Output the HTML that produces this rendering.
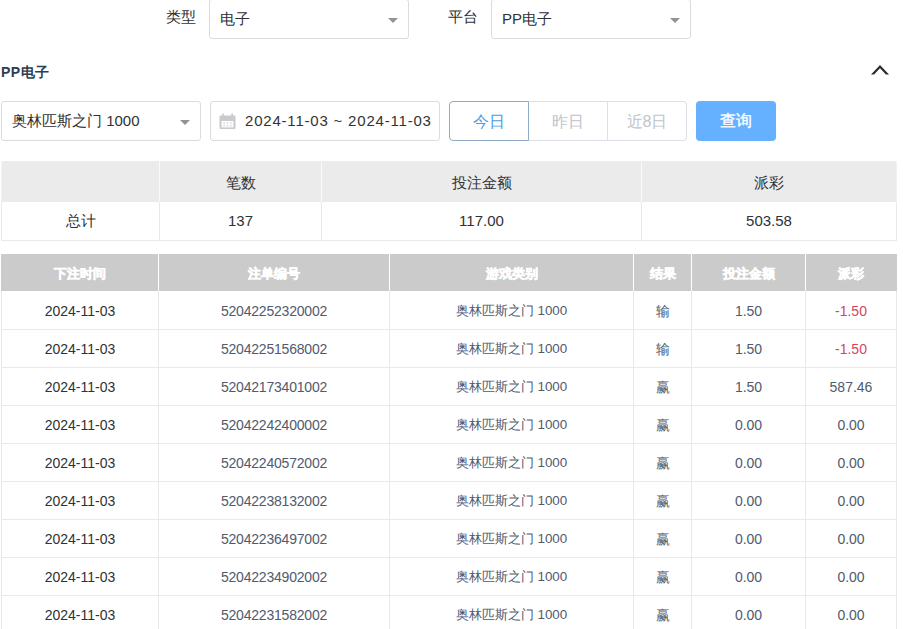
<!DOCTYPE html>
<html><head><meta charset="utf-8">
<style>
*{box-sizing:border-box;margin:0;padding:0}
html,body{width:903px;height:629px;overflow:hidden;background:#fff}
body{position:relative;font-family:"Liberation Sans",sans-serif;font-size:14px;color:#303133}
.a{position:absolute}
.bd{background:#e9e9e9}
.lbl{position:absolute;font-size:15px;color:#303133;line-height:16px;white-space:nowrap}
.sel{position:absolute;height:40px;border:1px solid #dcdcdc;border-radius:3px;background:#fff}
.sel .t{position:absolute;left:10px;top:0;line-height:38px;font-size:15px;color:#303133;white-space:nowrap}
.tri{position:absolute;width:0;height:0;border-left:5px solid transparent;border-right:5px solid transparent;border-top:5px solid #909399}
.title{position:absolute;left:1px;top:63px;font-weight:bold;font-size:14px;letter-spacing:0.5px;color:#2c3e50;line-height:18px;white-space:nowrap}
.btn{position:absolute;top:101px;height:40px;border:1px solid #dcdfe6;background:#fff;color:#c0c4cc;font-size:16px;line-height:40px;text-align:center}
.qry{position:absolute;left:696px;top:101px;width:80px;height:40px;background:#66b1ff;border-radius:4px;color:#fff;font-size:16px;line-height:40px;text-align:center;-webkit-text-stroke:0.35px #fff}
.sc{text-align:center;font-size:15px;color:#303133;white-space:nowrap}
.sh{padding-top:1px}
.mh{text-align:center;font-size:13px;font-weight:bold;-webkit-text-stroke:0.5px #fff;color:#fff;white-space:nowrap;padding-top:1px}
.mc{text-align:center;font-size:14px;color:#515a6e;white-space:nowrap;padding-top:1px}
.mc.dt{color:#303133}
.mc.c2{font-size:13.4px}
.mc.c1{letter-spacing:-0.2px}
.red{color:#d4455e!important}
</style></head><body>
<div class="lbl" style="left:166px;top:9px">类型</div>
<div class="sel" style="left:209px;top:-1px;width:200px"><span class="t" style="top:0px">电子</span><i class="tri" style="left:178px;top:18px"></i></div>
<div class="lbl" style="left:448px;top:9px">平台</div>
<div class="sel" style="left:491px;top:-1px;width:200px"><span class="t" style="top:0px">PP电子</span><i class="tri" style="left:178px;top:18px"></i></div>

<div class="title">PP电子</div>
<svg class="a" style="left:870px;top:63px" width="20" height="13" viewBox="0 0 20 13"><path d="M1 11.5 L10 2 L19 11.5 L15.9 11.5 L10 5.3 L4.1 11.5 Z" fill="#2b2d33"/></svg>

<div class="sel" style="left:1px;top:101px;width:200px"><span class="t">奥林匹斯之门 1000</span><i class="tri" style="left:178px;top:18px"></i></div>
<div class="sel" style="left:210px;top:101px;width:230px">
<svg class="a" style="left:8px;top:11px" width="18" height="18" viewBox="0 0 18 18"><rect x="0.5" y="2.5" width="16" height="13.6" rx="1" fill="#c9cacd"/><rect x="2.6" y="8" width="11.8" height="6.4" fill="#fff"/><rect x="3.3" y="0.4" width="1.8" height="3.6" rx="0.6" fill="#c9cacd"/><rect x="12.2" y="0.4" width="1.8" height="3.6" rx="0.6" fill="#c9cacd"/><g fill="#d6d8dc"><rect x="4.3" y="9.2" width="1.6" height="1.5"/><rect x="7.7" y="9.2" width="1.6" height="1.5"/><rect x="11.1" y="9.2" width="1.6" height="1.5"/><rect x="4.3" y="12" width="1.6" height="1.5"/><rect x="7.7" y="12" width="1.6" height="1.5"/><rect x="11.1" y="12" width="1.6" height="1.5"/></g></svg>
<span class="t" style="left:34px;font-size:15px;letter-spacing:0.8px;top:0px;color:#333">2024-11-03 ~ 2024-11-03</span></div>

<div class="btn" style="left:529px;width:79px;border-left:none">昨日</div>
<div class="btn" style="left:608px;width:79px;border-left:none;border-radius:0 4px 4px 0">近8日</div>
<div class="btn" style="left:449px;width:80px;border-color:#8eacc8;color:#4c9be6;border-radius:4px 0 0 4px">今日</div>
<div class="qry">查询</div>
<div class="a" style="left:1px;top:161px;width:896px;height:41px;background:#ebebeb;border-radius:3px 3px 0 0;box-shadow:inset 1px 0 0 #f2f2f2,inset -1px 0 0 #f2f2f2"></div>
<div class="a bd" style="left:1px;top:202px;width:1px;height:39px"></div>
<div class="a bd" style="left:896px;top:202px;width:1px;height:39px"></div>
<div class="a bd" style="left:1px;top:240px;width:896px;height:1px"></div>
<div class="a" style="left:159px;top:161px;width:1px;height:41px;background:#fafafa"></div>
<div class="a bd" style="left:159px;top:202px;width:1px;height:39px"></div>
<div class="a" style="left:321px;top:161px;width:1px;height:41px;background:#fafafa"></div>
<div class="a bd" style="left:321px;top:202px;width:1px;height:39px"></div>
<div class="a" style="left:641px;top:161px;width:1px;height:41px;background:#fafafa"></div>
<div class="a bd" style="left:641px;top:202px;width:1px;height:39px"></div>
<div class="a sc sh" style="left:1px;top:161px;width:159px;height:41px;line-height:41px"></div>
<div class="a sc sbt" style="left:1px;top:202px;width:159px;height:38px;line-height:38px">总计</div>
<div class="a sc sh" style="left:159px;top:161px;width:163px;height:41px;line-height:41px">笔数</div>
<div class="a sc sbt" style="left:159px;top:202px;width:163px;height:38px;line-height:38px">137</div>
<div class="a sc sh" style="left:321px;top:161px;width:321px;height:41px;line-height:41px">投注金额</div>
<div class="a sc sbt" style="left:321px;top:202px;width:321px;height:38px;line-height:38px">117.00</div>
<div class="a sc sh" style="left:641px;top:161px;width:256px;height:41px;line-height:41px">派彩</div>
<div class="a sc sbt" style="left:641px;top:202px;width:256px;height:38px;line-height:38px">503.58</div>
<div class="a" style="left:1px;top:254px;width:896px;height:37px;background:#cbcbcb"></div>
<div class="a" style="left:158px;top:254px;width:1px;height:37px;background:#fff"></div>
<div class="a" style="left:389px;top:254px;width:1px;height:37px;background:#fff"></div>
<div class="a" style="left:633px;top:254px;width:1px;height:37px;background:#fff"></div>
<div class="a" style="left:691px;top:254px;width:1px;height:37px;background:#fff"></div>
<div class="a" style="left:805px;top:254px;width:1px;height:37px;background:#fff"></div>
<div class="a mh" style="left:1px;top:254px;width:158px;height:37px;line-height:37px">下注时间</div>
<div class="a mh" style="left:158px;top:254px;width:232px;height:37px;line-height:37px">注单编号</div>
<div class="a mh" style="left:389px;top:254px;width:245px;height:37px;line-height:37px">游戏类别</div>
<div class="a mh" style="left:633px;top:254px;width:59px;height:37px;line-height:37px">结果</div>
<div class="a mh" style="left:691px;top:254px;width:115px;height:37px;line-height:37px">投注金额</div>
<div class="a mh" style="left:805px;top:254px;width:92px;height:37px;line-height:37px">派彩</div>
<div class="a bd" style="left:1px;top:291px;width:1px;height:342px"></div>
<div class="a bd" style="left:158px;top:291px;width:1px;height:342px"></div>
<div class="a bd" style="left:389px;top:291px;width:1px;height:342px"></div>
<div class="a bd" style="left:633px;top:291px;width:1px;height:342px"></div>
<div class="a bd" style="left:691px;top:291px;width:1px;height:342px"></div>
<div class="a bd" style="left:805px;top:291px;width:1px;height:342px"></div>
<div class="a bd" style="left:896px;top:291px;width:1px;height:342px"></div>
<div class="a bd" style="left:1px;top:329px;width:896px;height:1px"></div>
<div class="a mc dt c0" style="left:1px;top:291px;width:158px;height:38px;line-height:38px">2024-11-03</div>
<div class="a mc c1" style="left:158px;top:291px;width:232px;height:38px;line-height:38px">52042252320002</div>
<div class="a mc c2" style="left:389px;top:291px;width:245px;height:38px;line-height:38px">奥林匹斯之门 1000</div>
<div class="a mc c3" style="left:633px;top:291px;width:59px;height:38px;line-height:38px">输</div>
<div class="a mc c4" style="left:691px;top:291px;width:115px;height:38px;line-height:38px">1.50</div>
<div class="a mc red c5" style="left:805px;top:291px;width:92px;height:38px;line-height:38px">-1.50</div>
<div class="a bd" style="left:1px;top:367px;width:896px;height:1px"></div>
<div class="a mc dt c0" style="left:1px;top:329px;width:158px;height:38px;line-height:38px">2024-11-03</div>
<div class="a mc c1" style="left:158px;top:329px;width:232px;height:38px;line-height:38px">52042251568002</div>
<div class="a mc c2" style="left:389px;top:329px;width:245px;height:38px;line-height:38px">奥林匹斯之门 1000</div>
<div class="a mc c3" style="left:633px;top:329px;width:59px;height:38px;line-height:38px">输</div>
<div class="a mc c4" style="left:691px;top:329px;width:115px;height:38px;line-height:38px">1.50</div>
<div class="a mc red c5" style="left:805px;top:329px;width:92px;height:38px;line-height:38px">-1.50</div>
<div class="a bd" style="left:1px;top:405px;width:896px;height:1px"></div>
<div class="a mc dt c0" style="left:1px;top:367px;width:158px;height:38px;line-height:38px">2024-11-03</div>
<div class="a mc c1" style="left:158px;top:367px;width:232px;height:38px;line-height:38px">52042173401002</div>
<div class="a mc c2" style="left:389px;top:367px;width:245px;height:38px;line-height:38px">奥林匹斯之门 1000</div>
<div class="a mc c3" style="left:633px;top:367px;width:59px;height:38px;line-height:38px">赢</div>
<div class="a mc c4" style="left:691px;top:367px;width:115px;height:38px;line-height:38px">1.50</div>
<div class="a mc c5" style="left:805px;top:367px;width:92px;height:38px;line-height:38px">587.46</div>
<div class="a bd" style="left:1px;top:443px;width:896px;height:1px"></div>
<div class="a mc dt c0" style="left:1px;top:405px;width:158px;height:38px;line-height:38px">2024-11-03</div>
<div class="a mc c1" style="left:158px;top:405px;width:232px;height:38px;line-height:38px">52042242400002</div>
<div class="a mc c2" style="left:389px;top:405px;width:245px;height:38px;line-height:38px">奥林匹斯之门 1000</div>
<div class="a mc c3" style="left:633px;top:405px;width:59px;height:38px;line-height:38px">赢</div>
<div class="a mc c4" style="left:691px;top:405px;width:115px;height:38px;line-height:38px">0.00</div>
<div class="a mc c5" style="left:805px;top:405px;width:92px;height:38px;line-height:38px">0.00</div>
<div class="a bd" style="left:1px;top:481px;width:896px;height:1px"></div>
<div class="a mc dt c0" style="left:1px;top:443px;width:158px;height:38px;line-height:38px">2024-11-03</div>
<div class="a mc c1" style="left:158px;top:443px;width:232px;height:38px;line-height:38px">52042240572002</div>
<div class="a mc c2" style="left:389px;top:443px;width:245px;height:38px;line-height:38px">奥林匹斯之门 1000</div>
<div class="a mc c3" style="left:633px;top:443px;width:59px;height:38px;line-height:38px">赢</div>
<div class="a mc c4" style="left:691px;top:443px;width:115px;height:38px;line-height:38px">0.00</div>
<div class="a mc c5" style="left:805px;top:443px;width:92px;height:38px;line-height:38px">0.00</div>
<div class="a bd" style="left:1px;top:519px;width:896px;height:1px"></div>
<div class="a mc dt c0" style="left:1px;top:481px;width:158px;height:38px;line-height:38px">2024-11-03</div>
<div class="a mc c1" style="left:158px;top:481px;width:232px;height:38px;line-height:38px">52042238132002</div>
<div class="a mc c2" style="left:389px;top:481px;width:245px;height:38px;line-height:38px">奥林匹斯之门 1000</div>
<div class="a mc c3" style="left:633px;top:481px;width:59px;height:38px;line-height:38px">赢</div>
<div class="a mc c4" style="left:691px;top:481px;width:115px;height:38px;line-height:38px">0.00</div>
<div class="a mc c5" style="left:805px;top:481px;width:92px;height:38px;line-height:38px">0.00</div>
<div class="a bd" style="left:1px;top:557px;width:896px;height:1px"></div>
<div class="a mc dt c0" style="left:1px;top:519px;width:158px;height:38px;line-height:38px">2024-11-03</div>
<div class="a mc c1" style="left:158px;top:519px;width:232px;height:38px;line-height:38px">52042236497002</div>
<div class="a mc c2" style="left:389px;top:519px;width:245px;height:38px;line-height:38px">奥林匹斯之门 1000</div>
<div class="a mc c3" style="left:633px;top:519px;width:59px;height:38px;line-height:38px">赢</div>
<div class="a mc c4" style="left:691px;top:519px;width:115px;height:38px;line-height:38px">0.00</div>
<div class="a mc c5" style="left:805px;top:519px;width:92px;height:38px;line-height:38px">0.00</div>
<div class="a bd" style="left:1px;top:595px;width:896px;height:1px"></div>
<div class="a mc dt c0" style="left:1px;top:557px;width:158px;height:38px;line-height:38px">2024-11-03</div>
<div class="a mc c1" style="left:158px;top:557px;width:232px;height:38px;line-height:38px">52042234902002</div>
<div class="a mc c2" style="left:389px;top:557px;width:245px;height:38px;line-height:38px">奥林匹斯之门 1000</div>
<div class="a mc c3" style="left:633px;top:557px;width:59px;height:38px;line-height:38px">赢</div>
<div class="a mc c4" style="left:691px;top:557px;width:115px;height:38px;line-height:38px">0.00</div>
<div class="a mc c5" style="left:805px;top:557px;width:92px;height:38px;line-height:38px">0.00</div>
<div class="a bd" style="left:1px;top:633px;width:896px;height:1px"></div>
<div class="a mc dt c0" style="left:1px;top:595px;width:158px;height:38px;line-height:38px">2024-11-03</div>
<div class="a mc c1" style="left:158px;top:595px;width:232px;height:38px;line-height:38px">52042231582002</div>
<div class="a mc c2" style="left:389px;top:595px;width:245px;height:38px;line-height:38px">奥林匹斯之门 1000</div>
<div class="a mc c3" style="left:633px;top:595px;width:59px;height:38px;line-height:38px">赢</div>
<div class="a mc c4" style="left:691px;top:595px;width:115px;height:38px;line-height:38px">0.00</div>
<div class="a mc c5" style="left:805px;top:595px;width:92px;height:38px;line-height:38px">0.00</div>
</body></html>
